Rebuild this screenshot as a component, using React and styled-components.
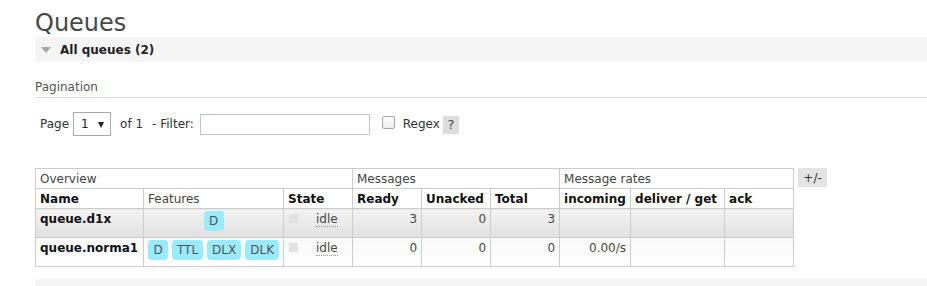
import React from "react";
import styled, { createGlobalStyle } from "styled-components";

const GlobalStyle = createGlobalStyle`
  html, body { margin: 0; padding: 0; background: #fff; }
  body {
    font-family: "DejaVu Sans", Verdana, sans-serif;
    font-size: 12px;
    color: #484848;
  }
`;

const Page = styled.main`
  padding: 9px 0 0 35px;
`;

const Title = styled.h1`
  margin: 0;
  font-size: 24px;
  line-height: 28px;
  font-weight: normal;
  color: #484848;
`;

const SectionBar = styled.div`
  display: flex;
  align-items: center;
  height: 25px;
  padding-left: 6px;
  background: #f5f5f5;
`;

const Caret = styled.span`
  width: 0;
  height: 0;
  border-left: 5px solid transparent;
  border-right: 5px solid transparent;
  border-top: 6px solid #a8a8a8;
  margin-right: 9px;
  margin-top: 1px;
`;

const SectionLabel = styled.span`
  font-weight: bold;
  color: #222;
`;

const SubHeading = styled.h3`
  margin: 18px 0 0;
  padding-bottom: 3px;
  border-bottom: 1px solid #ddd;
  font-size: 12px;
  line-height: 14px;
  font-weight: normal;
  color: #555;
`;

const Toolbar = styled.div`
  display: flex;
  align-items: center;
  height: 24px;
  margin-top: 14px;
  padding-left: 5px;
  color: #333;
`;

const ToolText = styled.span`
  margin-right: ${(p) => p.$gap ?? 0}px;
`;

const SelectWrap = styled.span`
  position: relative;
  display: inline-block;
  margin: 0 9px 0 4px;
`;

const PageSelect = styled.select`
  appearance: none;
  -webkit-appearance: none;
  width: 38px;
  height: 24px;
  box-sizing: border-box;
  border: 1px solid #aaa;
  border-radius: 0;
  background: #fff;
  padding: 0 0 0 7px;
  font-family: inherit;
  font-size: 12px;
  color: #222;
  outline: none;
`;

const SelectArrow = styled.span`
  position: absolute;
  right: 7px;
  top: 10px;
  width: 0;
  height: 0;
  border-left: 3.5px solid transparent;
  border-right: 3.5px solid transparent;
  border-top: 6px solid #222;
  pointer-events: none;
`;

const FilterInput = styled.input`
  width: 170px;
  height: 21px;
  box-sizing: border-box;
  border: 1px solid #c4c4c4;
  margin: 0 12px 0 0;
  padding: 0 3px;
  font-family: inherit;
  font-size: 12px;
  outline: none;
`;

const Check = styled.input`
  appearance: none;
  -webkit-appearance: none;
  width: 13px;
  height: 13px;
  margin: -4px 8px 0 0;
  border: 1px solid #aaa;
  border-radius: 2px;
  background: linear-gradient(#fdfdfd, #ececec);
  box-sizing: border-box;
`;

const HelpBadge = styled.span`
  display: inline-flex;
  align-items: center;
  justify-content: center;
  width: 16px;
  height: 18px;
  margin-left: 3px;
  margin-top: 1px;
  background: #ddd;
  color: #4a3a5a;
  font-size: 13px;
`;

const TableRow = styled.div`
  display: flex;
  align-items: flex-start;
  gap: 5px;
  margin-top: 32px;
`;

const List = styled.table`
  border-collapse: collapse;
  table-layout: fixed;
  width: 759px;
  border: 1px solid #ccc;
`;

const HeadCell = styled.th`
  border: 1px solid #ccc;
  padding: 3px 4px 2px;
  line-height: 14px;
  text-align: left;
  white-space: nowrap;
  font-weight: ${(p) => (p.$strong ? "bold" : "normal")};
  color: ${(p) => (p.$strong ? "#111" : "#444")};
  background: #fff;
`;

const DataRow = styled.tr`
  & > td {
    background: ${(p) =>
      p.$alt
        ? "linear-gradient(#f3f3f3, #e1e1e1)"
        : "linear-gradient(#f9f9f9, #ffffff)"};
  }
`;

const Cell = styled.td`
  border: 1px solid #ccc;
  padding: 3px 4px 5px;
  height: 20px;
  line-height: 14px;
  vertical-align: top;
  white-space: nowrap;
  text-align: ${(p) => p.$align || "left"};
  font-weight: ${(p) => (p.$strong ? "bold" : "normal")};
  color: ${(p) => (p.$strong ? "#111" : "#484848")};
`;

const Features = styled.div`
  display: flex;
  justify-content: center;
  gap: 4px;
  margin-top: -1px;
`;

const Badge = styled.abbr`
  display: inline-block;
  box-sizing: border-box;
  height: 20px;
  line-height: 20px;
  padding: 0 5px;
  min-width: 20px;
  text-align: center;
  border-radius: 4px;
  background: #99ebff;
  color: #555;
  text-decoration: none;
  font-size: 12px;
`;

const StateBox = styled.span`
  display: inline-block;
  width: 9px;
  height: 9px;
  margin: 2px 18px 0 1px;
  vertical-align: top;
  background: #e2e2e2;
`;

const StateText = styled.abbr`
  text-decoration: none;
  border-bottom: 1px dotted #999;
  color: #484848;
`;

const ToggleButton = styled.span`
  display: inline-flex;
  align-items: center;
  justify-content: center;
  width: 29px;
  height: 19px;
  margin-left: -1px;
  background: #e4e4e4;
  color: #333;
  font-size: 12px;
`;

const BottomBar = styled.div`
  margin-top: 12px;
  height: 12px;
  background: #f5f5f5;
`;

const colWidths = [108, 140, 69, 69, 69, 69, 71, 94, 69];

const queues = [
  {
    name: "queue.d1x",
    features: ["D"],
    ready: 3,
    unacked: 0,
    total: 3,
    incoming: "",
  },
  {
    name: "queue.norma1",
    features: ["D", "TTL", "DLX", "DLK"],
    ready: 0,
    unacked: 0,
    total: 0,
    incoming: "0.00/s",
  },
];

export default function App() {
  return (
    <>
      <GlobalStyle />
      <Page>
        <Title>Queues</Title>
        <SectionBar>
          <Caret />
          <SectionLabel>All queues (2)</SectionLabel>
        </SectionBar>
        <SubHeading>Pagination</SubHeading>
        <Toolbar>
          <ToolText>Page</ToolText>
          <SelectWrap>
            <PageSelect defaultValue="1">
              <option value="1">1</option>
            </PageSelect>
            <SelectArrow />
          </SelectWrap>
          <ToolText $gap={9}>of 1</ToolText>
          <ToolText $gap={6}>- Filter:</ToolText>
          <FilterInput type="text" />
          <Check type="checkbox" />
          <ToolText>Regex</ToolText>
          <HelpBadge>?</HelpBadge>
        </Toolbar>
        <TableRow>
          <List>
            <colgroup>
              {colWidths.map((w, i) => (
                <col key={i} style={{ width: w }} />
              ))}
            </colgroup>
            <thead>
              <tr>
                <HeadCell colSpan={3}>Overview</HeadCell>
                <HeadCell colSpan={3}>Messages</HeadCell>
                <HeadCell colSpan={3}>Message rates</HeadCell>
              </tr>
              <tr>
                <HeadCell $strong>Name</HeadCell>
                <HeadCell>Features</HeadCell>
                <HeadCell $strong>State</HeadCell>
                <HeadCell $strong>Ready</HeadCell>
                <HeadCell $strong>Unacked</HeadCell>
                <HeadCell $strong>Total</HeadCell>
                <HeadCell $strong>incoming</HeadCell>
                <HeadCell $strong>deliver / get</HeadCell>
                <HeadCell $strong>ack</HeadCell>
              </tr>
            </thead>
            <tbody>
              {queues.map((q, i) => (
                <DataRow key={q.name} $alt={i % 2 === 0}>
                  <Cell $strong>{q.name}</Cell>
                  <Cell>
                    <Features>
                      {q.features.map((f) => (
                        <Badge key={f}>{f}</Badge>
                      ))}
                    </Features>
                  </Cell>
                  <Cell>
                    <StateBox />
                    <StateText>idle</StateText>
                  </Cell>
                  <Cell $align="right">{q.ready}</Cell>
                  <Cell $align="right">{q.unacked}</Cell>
                  <Cell $align="right">{q.total}</Cell>
                  <Cell $align="right">{q.incoming}</Cell>
                  <Cell />
                  <Cell />
                </DataRow>
              ))}
            </tbody>
          </List>
          <ToggleButton>+/-</ToggleButton>
        </TableRow>
        <BottomBar />
      </Page>
    </>
  );
}
